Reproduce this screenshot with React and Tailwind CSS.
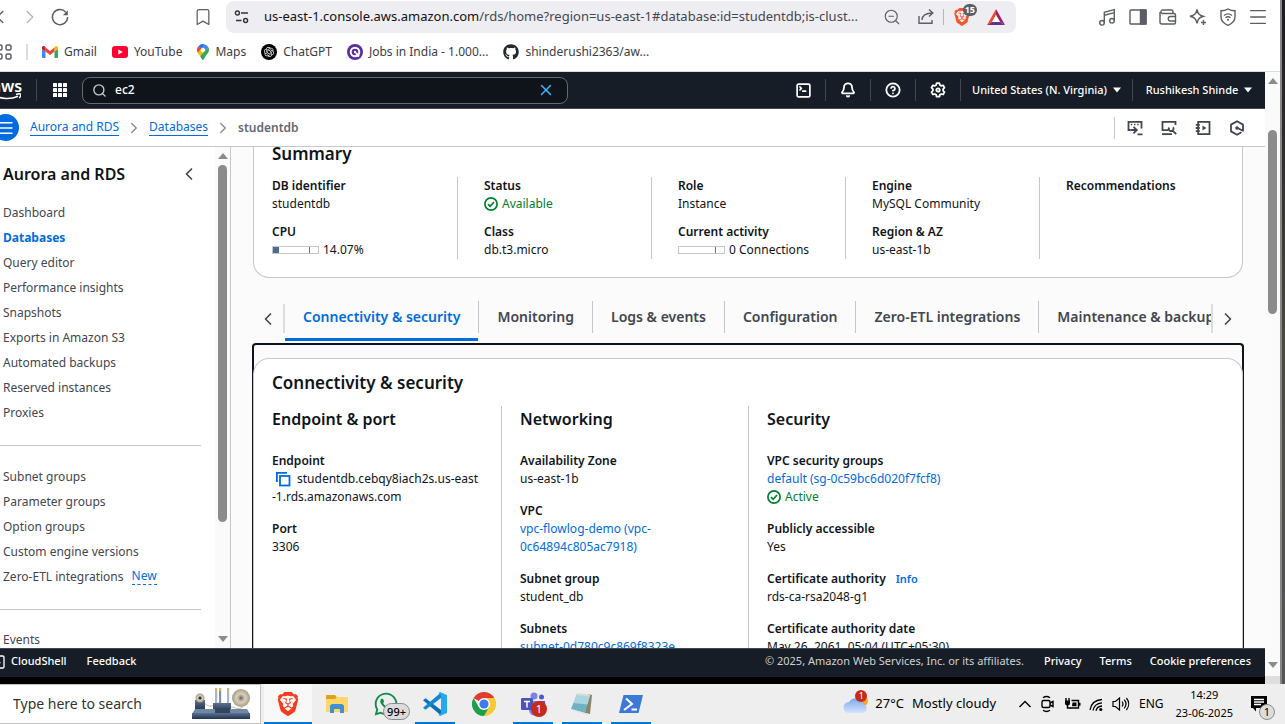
import {
  Bell,
  Bookmark,
  ChevronLeft,
  ChevronRight,
  CircleHelp,
  Menu,
  Search,
  SquareTerminal,
  X,
  ZoomOut,
} from "lucide-react";
import { SiBrave } from "react-icons/si";
import { RiOpenaiFill } from "react-icons/ri";
import { FaGithub, FaWhatsapp } from "react-icons/fa";

/* ---------- icons ---------- */

function Svg({ w = 20, h = w, box = "0 0 20 20", children, ...rest }) {
  return (
    <svg
      width={w}
      height={h}
      viewBox={box}
      fill="none"
      stroke="currentColor"
      strokeWidth="1.4"
      aria-hidden="true"
      className="shrink-0"
      {...rest}
    >
      {children}
    </svg>
  );
}

const ReloadIcon = () => (
  <Svg>
    <path d="M15.8 5.2A7.6 7.6 0 1 0 17.6 10" />
    <path d="M17.9 3.2v5h-5z" fill="currentColor" stroke="none" />
  </Svg>
);

const SiteSettingsIcon = () => (
  <Svg w={16} box="0 0 16 16">
    <circle cx="3.4" cy="4" r="2" />
    <path d="M7 4h7M2 11.5h5.500" />
    <circle cx="11.6" cy="11.5" r="2" />
  </Svg>
);

const ShareIcon = () => (
  <Svg w={18} box="0 0 18 18">
    <path d="M2 8v7.300h13V12" />
    <path d="M5 12c.3-4.500 3-7 10.500-7M12 1.500L15.800 5 12 8.500" />
  </Svg>
);

const BatIcon = () => (
  <Svg w={18} h={16} box="0 0 18 16" stroke="none">
    <path d="M9 0L0 16l5-3 4-7z" fill="#ff4724" />
    <path d="M9 0l9 16-5-3-4-7z" fill="#9e1f63" />
    <path d="M0 16h18l-5-3H5z" fill="#662d91" />
    <path d="M9 6l4 7H5z" fill="#fff" />
  </Svg>
);

const MusicIcon = () => (
  <Svg>
    <circle cx="4" cy="15.800" r="2.300" />
    <circle cx="14" cy="13.800" r="2.300" />
    <path d="M6.300 15.800V5.200l10-2.600v11.200M6.300 8.200l10-2.600" />
  </Svg>
);

const PanelIcon = () => (
  <Svg>
    <rect x="2" y="3" width="16" height="14" rx="1" />
    <path d="M12.500 3H18v14h-5.500z" fill="currentColor" />
  </Svg>
);

const WalletIcon = () => (
  <Svg>
    <path d="M15 6V4.500A1.500 1.500 0 0 0 13.500 3H4a2 2 0 0 0 0 3.500h12A1.500 1.500 0 0 1 17.500 8v7.500A1.500 1.500 0 0 1 16 17H4a2 2 0 0 1-2-2V5" />
    <path d="M17.500 9.500h-5a2.200 2.200 0 0 0 0 4.500h5" />
  </Svg>
);

const SparkleIcon = () => (
  <Svg>
    <path d="M9 2.500c.8 4 2 5.500 6.500 6.800C11 10.500 9.800 12 9 16.500 8.200 12 7 10.500 2 9.300 7 8 8.200 6.500 9 2.500zM15.500 13v5M13 15.500h5" />
  </Svg>
);

const ShieldIcon = () => (
  <Svg>
    <path d="M10 2c2 1.300 4.500 1.800 7 1.800v6C17 13.500 14.500 16.500 10 18.300 5.500 16.500 3 13.500 3 9.800v-6C5.500 3.800 8 3.300 10 2z" />
    <path d="M6 8.500c2.500-2 5.500-2 8 0M7.500 10.700c1.500-1.200 3.500-1.200 5 0" />
    <circle cx="10" cy="12.800" r="1" fill="currentColor" stroke="none" />
  </Svg>
);

const AppsIcon = () => (
  <Svg w={18} box="0 0 18 18" strokeWidth="1.500">
    <rect x="2" y="2" width="5" height="5" rx="1.500" />
    <rect x="11" y="2" width="5" height="5" rx="1.500" />
    <rect x="2" y="11" width="5" height="5" rx="1.500" />
    <rect x="11" y="11" width="5" height="5" rx="1.500" />
  </Svg>
);

const GmailIcon = () => (
  <Svg w={16} h={12} box="0 0 16 12" stroke="none">
    <path d="M1 12h2.500V5.500L0 3v8a1 1 0 0 0 1 1z" fill="#4285f4" />
    <path d="M12.500 12H15a1 1 0 0 0 1-1V3l-3.500 2.500z" fill="#34a853" />
    <path d="M12.500 1.500v4L16 3V1.700C16 .2 14.300-.5 13.200.4z" fill="#fbbc04" />
    <path d="M3.500 5.500v-4L8 5l4.500-3.500v4L8 9z" fill="#ea4335" />
    <path d="M0 1.700V3l3.500 2.500v-4L2.800.4C1.700-.5 0 .2 0 1.700z" fill="#c5221f" />
  </Svg>
);

const YouTubeIcon = () => (
  <Svg w={16} h={12} box="0 0 16 12" stroke="none">
    <rect width="16" height="12" rx="3" fill="#ff0033" />
    <path d="M6.300 3.400v5.200L10.800 6z" fill="#fff" />
  </Svg>
);

const MapsIcon = () => (
  <Svg w={12} h={16} box="0 0 12 16" stroke="none">
    <path d="M6 0a6 6 0 0 0-4.600 2.200L4.300 4.600 8 .4A6 6 0 0 0 6 0z" fill="#1a73e8" />
    <path d="M1.400 2.200A6 6 0 0 0 .9 9l3.400-4.400z" fill="#ea4335" />
    <path d="M8 .4L4.300 4.600a2.200 2.200 0 0 1 3.400 2.800l3.600-4.200A6 6 0 0 0 8 .4z" fill="#4285f4" />
    <path d="M.9 9c.5 1 1.300 2 2.200 3.200l4.600-4.800a2.200 2.200 0 0 1-3.400-2.800z" fill="#fbbc04" />
    <path d="M11.300 3.200L3.100 12.200C4.300 13.800 5 16 6 16s1.300-2.300 2.800-4.200C10.500 9.500 12 8 12 6c0-1-.2-2-.7-2.800z" fill="#34a853" />
  </Svg>
);

const JobsIcon = () => (
  <Svg w={16} box="0 0 16 16" stroke="#fff">
    <circle cx="8" cy="8" r="8" fill="#5b2d9e" stroke="none" />
    <circle cx="8" cy="8" r="4.300" strokeWidth="2" />
    <path d="M9 9l3 3.500" strokeWidth="2" />
    <circle cx="8" cy="8" r="1.200" fill="#fff" stroke="none" />
  </Svg>
);

const ConsoleGridIcon = () => (
  <Svg w={14} box="0 0 14 14" fill="#fff" stroke="none">
    {[0, 5, 10].map((y) =>
      [0, 5, 10].map((x) => <rect key={`${x}-${y}`} x={x} y={y} width="4" height="4" rx=".5" />),
    )}
  </Svg>
);

const GearIcon = () => (
  <Svg w={16} box="0 0 16 16" strokeWidth="1.800">
    <path
      d="M6.600 1.200h2.800l.5 1.900 1.300.8 1.900-.6 1.400 2.400-1.400 1.400v1.600l1.400 1.400-1.400 2.400-1.900-.5-1.300.8-.5 1.900H6.600l-.5-1.900-1.300-.8-1.900.5-1.400-2.400 1.400-1.400V7.100L1.500 5.700l1.400-2.400 1.900.6 1.300-.8z"
      strokeLinejoin="round"
    />
    <circle cx="8" cy="8" r="1.700" />
  </Svg>
);

const QueryShellIcon = () => (
  <Svg w={16} box="0 0 16 16" strokeWidth="1.800">
    <path d="M14.500 8.500V1.800H1.500v8.200H3.500" />
    <path d="M3.800 4.500h1.400M7 4.500h1.400M10.200 4.500h1.400" strokeWidth="1.300" />
    <path d="M3.500 10H9.500M6.500 6.800L9.800 10l-3.300 3.300M10.500 14.300H15.500" />
  </Svg>
);

const ScreenWrenchIcon = () => (
  <Svg w={16} box="0 0 16 16" strokeWidth="1.800">
    <path d="M14.500 5V1.800h-13v8.400H7M1 14.200h10" />
    <path d="M15.200 14.200l-3.700-3.700M8.300 7.500a2.200 2.200 0 0 0 3.200 3 2.200 2.200 0 0 0 .6-3.300" />
  </Svg>
);

const NotebookIcon = () => (
  <Svg w={16} box="0 0 16 16" strokeWidth="1.800">
    <path d="M3.200 1.800H14.500v12.400H3.200zM.8 4.800h4M.8 8h4M.8 11.200h4" />
    <path d="M7.500 5.500v5l4-2.500z" fill="currentColor" stroke="none" />
  </Svg>
);

const HexIcon = () => (
  <Svg w={16} box="0 0 16 16" strokeWidth="1.800">
    <path d="M12.500 12.200L8 14.800 2 11.400V4.600L8 1.200l6 3.400v6.200L8.500 8" strokeLinejoin="round" />
    <circle cx="8" cy="8" r="1.800" fill="currentColor" stroke="none" />
  </Svg>
);

const CheckIcon = () => (
  <Svg w={14} box="0 0 14 14" strokeWidth="1.700">
    <circle cx="7" cy="7" r="6.100" />
    <path d="M4 7.200l2.200 2.100L10 5" />
  </Svg>
);

const CopyIcon = () => (
  <Svg w={16} box="0 0 16 16" strokeWidth="1.800">
    <path d="M1.900 11V1.900H12" />
    <rect x="5" y="5" width="9.500" height="9.500" />
  </Svg>
);

const Caret = ({ up, className = "" }) => (
  <svg width="10" height="6" viewBox="0 0 10 6" className={className} aria-hidden="true">
    <path d={up ? "M0 6l5-6 5 6z" : "M0 0h10L5 6z"} fill="currentColor" />
  </svg>
);

const LatheIcon = () => (
  <Svg w={60} h={34} box="0 0 60 34" stroke="none">
    <defs>
      <linearGradient id="steel" x1="0" y1="0" x2="0" y2="1">
        <stop offset="0" stopColor="#5b7191" />
        <stop offset="1" stopColor="#22334d" />
      </linearGradient>
      <radialGradient id="reel">
        <stop offset="0" stopColor="#8f8574" />
        <stop offset=".5" stopColor="#d8cfb9" />
        <stop offset="1" stopColor="#a79c83" />
      </radialGradient>
    </defs>
    <path d="M9 14c6 2 7 6 12 5 5-2 6-4 9-3M52 20c-6 4-9-1-14 0" stroke="#b9a77b" strokeWidth=".8" />
    <rect x="24" y="3" width="2.200" height="15" fill="#a9b6c6" />
    <rect x="28" y="3" width="2.200" height="15" fill="#8192a8" />
    <rect x="36" y="3" width="2.200" height="15" fill="#a9b6c6" />
    <path d="M24 1h2.200v3H24zM28 1h2.200v3H28zM36 1h2.200v3H36z" fill="#d9b65c" />
    <path d="M4 13h10v10H4z" fill="url(#steel)" />
    <circle cx="9" cy="11" r="4.500" fill="url(#reel)" />
    <circle cx="9" cy="11" r="1.500" fill="#29303d" />
    <circle cx="50" cy="11" r="9" fill="url(#reel)" />
    <circle cx="50" cy="11" r="1.500" fill="#7a6a8c" />
    <path d="M22 16h18v9H22z" fill="url(#steel)" />
    <path d="M4 22h52l3 5H1z" fill="#6f87a5" />
    <path d="M1 26h58v6H1z" fill="url(#steel)" />
    <path d="M24 21h15v5H24z" fill="#31455f" />
  </Svg>
);

const FolderIcon = () => (
  <Svg w={22} h={20} box="0 0 22 20" stroke="none">
    <path d="M0 1h9l2 2h11v15H0z" fill="#ffd768" />
    <path d="M0 1h9l1.500 2L9 5H0z" fill="#e0a21b" />
    <path d="M4 19v-7.500L6 10h10l2 1.500V19h-4v-4H8v4z" fill="#3f8fd2" />
  </Svg>
);

const CodeIcon = () => (
  <Svg w={24} box="0 0 24 24" stroke="none">
    <path d="M0 8.200L2.500 6.200 18 18v5.500z" fill="#0a70b8" />
    <path d="M0 15.800l2.500 2L18 6V.5z" fill="#1286d0" />
    <path d="M17 0l7 3v18l-7 3-1.500-1L18 21V3l-2.500-2z" fill="#25a8ef" />
  </Svg>
);

const ChromeIcon = () => (
  <Svg w={24} box="0 0 24 24" stroke="none">
    <path d="M12 12L1.600 6A12 12 0 0 1 22.400 6z" fill="#e33b2e" />
    <path d="M12 6h10.400A12 12 0 0 1 12 24l5.200-9z" fill="#fcc934" />
    <path d="M6.800 15L1.600 6A12 12 0 0 0 12 24l5.200-9z" fill="#1e9e4a" />
    <circle cx="12" cy="12" r="6" fill="#fff" />
    <circle cx="12" cy="12" r="4.600" fill="#3b7ded" />
  </Svg>
);

const TeamsIcon = () => (
  <Svg w={24} box="0 0 24 24" stroke="none">
    <circle cx="13" cy="4" r="3.500" fill="#7b83eb" />
    <circle cx="20.500" cy="5" r="2.500" fill="#5059c9" />
    <path d="M8 9h11v9a5.500 5.500 0 0 1-11 0z" fill="#7b83eb" />
    <path d="M18 9h6v6a4 4 0 0 1-6 3z" fill="#5059c9" />
    <rect y="6" width="12" height="12" rx="1" fill="#4b53bc" />
    <path d="M3 9.500h6M6 9.500V15.500" stroke="#fff" strokeWidth="1.500" />
  </Svg>
);

const NotepadIcon = () => (
  <Svg w={24} box="0 0 24 24" stroke="none">
    <path d="M18 2l4 1-2 19-5-1z" fill="#8c8468" />
    <path d="M7 2l13 1.500L15 21 1 17z" fill="#6fb3c2" />
    <path d="M7 2l13 1.500-2.500 9L3.500 11z" fill="#a9d6de" />
    <path d="M7 1l13 1.500v2L6.500 3z" fill="#d8dcdc" />
    <path d="M1 17l14 4 4 1-3 1L4 19z" fill="#e6e6e6" />
  </Svg>
);

const PowerShellIcon = () => (
  <Svg w={24} h={20} box="0 0 24 20" stroke="none">
    <path d="M4.500 1H24l-4.500 18H0z" fill="#3c78d8" />
    <path d="M7 4.500l6 5.500-8 6M12.500 15.500H18" stroke="#fff" strokeWidth="2" />
  </Svg>
);

const CloudIcon = () => (
  <Svg w={26} h={20} box="0 0 26 20" stroke="none">
    <defs>
      <linearGradient id="cloud" x1="0" y1="0" x2="0" y2="1">
        <stop offset="0" stopColor="#7ba9ef" />
        <stop offset="1" stopColor="#d4e3fb" />
      </linearGradient>
    </defs>
    <circle cx="20" cy="7" r="5" fill="#f6a623" />
    <path d="M6 19a5.500 5.500 0 0 1 0-11 8 8 0 0 1 14.500 2A4.700 4.700 0 0 1 20 19z" fill="url(#cloud)" />
  </Svg>
);

const MeetNowIcon = () => (
  <Svg w={16} h={18} box="0 0 16 18">
    <rect x="2" y="5.500" width="8" height="7" rx="1.500" />
    <path d="M10 8l3-1.500v5L10 10M3 2.800c2-1.500 5-1.500 7 0M3 15.200c2 1.500 5 1.500 7 0" />
  </Svg>
);

const BatteryIcon = () => (
  <Svg w={17} h={14} box="0 0 17 14">
    <path d="M7.500 3.500h7v7.500H6M15.800 5.700v3" />
    <path d="M8.500 5.500h4v3.700H8zM1 3.500h5V6a2.500 2.500 0 0 1-5 0z" fill="currentColor" stroke="none" />
    <path d="M2 1v3M5 1v3M3.500 8v3h3" />
  </Svg>
);

const WifiIcon = () => (
  <Svg w={15} h={15} box="0 0 15 15" strokeWidth="1.300">
    <path d="M1 13C2 6.500 6 3 13 2.500M4 13.500C4.800 9 7.500 6.300 13 5.800M7 13.800C7.500 11 9.500 9.300 13 9" />
    <circle cx="11.800" cy="12.500" r="1.600" fill="currentColor" stroke="none" />
  </Svg>
);

const VolumeIcon = () => (
  <Svg w={18} h={16} box="0 0 18 16" strokeWidth="1.200">
    <path d="M1 5.500h2.500L7.500 2v12l-4-3.500H1zM10 5.500c1.200 1.500 1.200 3.500 0 5M12.200 3.700c2.200 2.600 2.200 6 0 8.600M14.400 2c3 3.600 3 8.400 0 12" />
  </Svg>
);

/* ---------- browser chrome ---------- */

function IconButton({ label, className = "", children }) {
  return (
    <button type="button" aria-label={label} className={`flex shrink-0 items-center justify-center ${className}`}>
      {children}
    </button>
  );
}

function Toolbar() {
  return (
    <div className="flex h-[34px] items-center pr-[7px] text-[#5c5e66]">
      <IconButton label="Back" className="-ml-[15px] w-[30px]">
        <ChevronLeft size={22} strokeWidth={1.5} />
      </IconButton>
      <IconButton label="Forward" className="w-[30px] text-[#b5b6ba]">
        <ChevronRight size={22} strokeWidth={1.5} />
      </IconButton>
      <IconButton label="Reload" className="w-[30px]">
        <ReloadIcon />
      </IconButton>
      <IconButton label="Bookmark this page" className="mr-2 ml-[113px] w-[30px]">
        <Bookmark size={20} strokeWidth={1.5} />
      </IconButton>
      <div className="flex h-8 min-w-0 flex-1 items-center rounded-lg bg-[#eeedf2] pr-1 pl-2">
        <span className="mr-[14px] text-[#333]">
          <SiteSettingsIcon />
        </span>
        <p className="min-w-0 flex-1 overflow-hidden text-[13px] whitespace-nowrap text-[#45474f]">
          <span className="text-[#111]">us-east-1.console.aws.amazon.com</span>
          /rds/home?region=us-east-1#database:id=studentdb;is-clust...
        </p>
        <IconButton label="Zoom out" className="ml-1 w-[34px]">
          <ZoomOut size={18} strokeWidth={1.5} />
        </IconButton>
        <IconButton label="Share" className="w-[34px]">
          <ShareIcon />
        </IconButton>
        <span className="h-4 w-px bg-[#b5b6bd]" />
        <IconButton label="Brave Shields" className="relative w-[36px] text-[#fb542b]">
          <SiBrave size={18} />
          <span className="absolute -top-1 right-[3px] rounded-md bg-[#5c5e66] px-[2px] text-[9px] leading-3 font-bold text-white">
            15
          </span>
        </IconButton>
        <IconButton label="Rewards" className="w-[32px]">
          <BatIcon />
        </IconButton>
      </div>
      <div className="ml-[77px] flex">
        <IconButton label="Music" className="w-[30px]"><MusicIcon /></IconButton>
        <IconButton label="Side panel" className="w-[30px]"><PanelIcon /></IconButton>
        <IconButton label="Wallet" className="w-[30px]"><WalletIcon /></IconButton>
        <IconButton label="Assistant" className="w-[30px]"><SparkleIcon /></IconButton>
        <IconButton label="VPN" className="w-[30px]"><ShieldIcon /></IconButton>
        <IconButton label="Menu" className="w-[30px]"><Menu size={22} strokeWidth={1.5} /></IconButton>
      </div>
    </div>
  );
}

const bookmarks = [
  { name: "Gmail", icon: <GmailIcon /> },
  { name: "YouTube", icon: <YouTubeIcon /> },
  { name: "Maps", icon: <MapsIcon /> },
  {
    name: "ChatGPT",
    icon: (
      <span className="flex size-4 items-center justify-center rounded-full bg-black text-white">
        <RiOpenaiFill size={12} />
      </span>
    ),
  },
  { name: "Jobs in India - 1.000...", icon: <JobsIcon /> },
  { name: "shinderushi2363/aw...", icon: <FaGithub size={16} className="text-[#24292f]" /> },
];

function BookmarksBar() {
  return (
    <div className="flex h-[38px] items-center border-b border-[#dcdce0] pb-px text-xs text-[#3b3d45]">
      <IconButton label="All apps" className="-ml-[5px] text-[#5c5e66]">
        <AppsIcon />
      </IconButton>
      <span className="mr-[14px] ml-[13px] h-4 w-[2px] bg-[#dcdce0]" />
      <nav className="flex items-center gap-[15px]">
        {bookmarks.map((b) => (
          <a key={b.name} href="#" className="flex items-center gap-[6px] whitespace-nowrap">
            {b.icon}
            {b.name}
          </a>
        ))}
      </nav>
    </div>
  );
}

/* ---------- AWS console ---------- */

function ConsoleHeader() {
  const cell = "flex h-[22px] w-[45px] shrink-0 items-center justify-center border-r border-[#424650]";
  return (
    <header className="flex h-[37px] items-center border-b border-[#424650] bg-[#161d26] text-[11px] font-medium text-white">
      <a href="#" aria-label="AWS home" className="-ml-2 flex w-[30px] flex-col items-center">
        <span className="text-base leading-3 font-semibold">aws</span>
        <svg width="28" height="8" viewBox="0 0 28 8" fill="none" stroke="#fff" strokeWidth="1.500" aria-hidden="true">
          <path d="M1 3c7 4.500 17 4.500 24 1.200M23 2.500c2-.8 4-.9 4.500-.4.400.8 0 2.500-1.200 4" />
        </svg>
      </a>
      <span className="ml-[14px] h-[22px] w-px bg-[#424650]" />
      <IconButton label="Services" className="w-[45px]">
        <ConsoleGridIcon />
      </IconButton>
      <label className="flex h-[27px] w-[486px] items-center rounded-lg border border-[#656871] bg-[#0f141a] pr-3 pl-[9px]">
        <Search size={15} strokeWidth={2.2} className="text-[#c6c6cd]" />
        <input
          aria-label="Search"
          defaultValue="ec2"
          className="ml-2 min-w-0 flex-1 bg-transparent text-xs font-medium outline-none"
        />
        <X size={18} className="text-[#42b4ff]" />
      </label>
      <div className="ml-auto flex items-center">
        <button type="button" aria-label="CloudShell" className={cell}><SquareTerminal size={17} strokeWidth={2.4} /></button>
        <button type="button" aria-label="Notifications" className={cell}><Bell size={16} strokeWidth={2.7} /></button>
        <button type="button" aria-label="Support" className={cell}><CircleHelp size={16} strokeWidth={2.7} /></button>
        <button type="button" aria-label="Settings" className={cell}><GearIcon /></button>
        <button type="button" className="flex h-[22px] w-[172px] items-center justify-center gap-[6px] whitespace-nowrap border-r border-[#424650]">
          United States (N. Virginia)
          <Caret className="w-[8px]" />
        </button>
        <button type="button" className="flex w-[132px] items-center justify-center gap-[6px] whitespace-nowrap">
          Rushikesh Shinde
          <Caret className="w-[8px]" />
        </button>
      </div>
    </header>
  );
}

function Breadcrumbs() {
  return (
    <div className="flex h-[38px] items-center border-b border-[#c6c6cd] bg-white text-xs">
      <IconButton label="Navigation" className="-ml-2 size-[27px] rounded-full bg-[#006ce0] text-white">
        <Menu size={18} />
      </IconButton>
      <nav aria-label="Breadcrumb" className="ml-[11px] flex items-center gap-[6px]">
        <a href="#" className="border-b border-[#006ce0] leading-4 text-[#006ce0]">Aurora and RDS</a>
        <ChevronRight size={18} className="text-[#8c8c94]" />
        <a href="#" className="border-b border-[#006ce0] leading-4 text-[#006ce0]">Databases</a>
        <ChevronRight size={18} className="text-[#8c8c94]" />
        <span className="font-semibold text-[#656871]">studentdb</span>
      </nav>
      <div className="mr-[20px] ml-auto flex items-center gap-[18px] text-[#424650]">
        <span className="-mr-[6px] h-[22px] w-px bg-[#c6c6cd]" />
        <IconButton label="Query shell"><QueryShellIcon /></IconButton>
        <IconButton label="Tools"><ScreenWrenchIcon /></IconButton>
        <IconButton label="Tutorials"><NotebookIcon /></IconButton>
        <IconButton label="Amazon Q"><HexIcon /></IconButton>
      </div>
    </div>
  );
}

const navGroups = [
  [
    "Dashboard",
    "Databases",
    "Query editor",
    "Performance insights",
    "Snapshots",
    "Exports in Amazon S3",
    "Automated backups",
    "Reserved instances",
    "Proxies",
  ],
  ["Subnet groups", "Parameter groups", "Option groups", "Custom engine versions", "Zero-ETL integrations"],
  ["Events"],
];

function Sidebar() {
  return (
    <aside className="flex w-[231px] shrink-0 border-r border-[#c6c6cd] bg-white">
      <div className="min-w-0 flex-1 overflow-hidden">
        <div className="flex h-[53px] items-center justify-between pr-[16px] pl-[3px]">
          <h2 className="text-base font-semibold text-[#0f141a]">Aurora and RDS</h2>
          <IconButton label="Collapse" className="text-[#424650]">
            <ChevronLeft size={20} />
          </IconButton>
        </div>
        {navGroups.map((group, i) => (
          <ul
            key={group[0]}
            className={`mr-[14px] pl-[3px] text-xs text-[#424650] ${
              i === 2 ? "pt-[17px]" : i === 1 ? "border-b border-[#c6c6cd] pt-[18px] pb-5" : "border-b border-[#c6c6cd] pb-5"
            }`}
          >
            {group.map((item) => (
              <li key={item} className="flex h-[25px] items-center">
                <a href="#" className={item === "Databases" ? "font-bold text-[#006ce0]" : ""}>
                  {item}
                </a>
                {item === "Zero-ETL integrations" && (
                  <span className="ml-2 border-b border-dashed border-[#006ce0] text-[#006ce0]">New</span>
                )}
              </li>
            ))}
          </ul>
        ))}
      </div>
      <div className="flex w-[15px] flex-col items-center bg-[#fafafa] py-[6px] text-[#8b8b8b]">
        <Caret up />
        <div className="mt-[6px] h-[357px] w-[9px] rounded-full bg-[#8b8b8b]" />
        <Caret className="mt-auto" />
      </div>
    </aside>
  );
}

function Field({ label, extra, children }) {
  return (
    <div className="leading-[18px]">
      <dt className="font-semibold">
        {label}
        {extra}
      </dt>
      <dd>{children}</dd>
    </div>
  );
}

function Status({ children }) {
  return (
    <span className="flex items-center gap-1 text-[#00802f]">
      <CheckIcon />
      {children}
    </span>
  );
}

function Gauge({ filled, children }) {
  return (
    <span className="flex items-center gap-1">
      <span className="flex h-2 w-[47px] border border-[#c6c6cd]">
        <span className={filled ? "w-[6px] bg-[#4a6a8f]" : ""} />
        <span className="mr-2 ml-auto w-px bg-[#c0504d]" />
      </span>
      {children}
    </span>
  );
}

function Link({ children }) {
  return (
    <a href="#" className="text-[#006ce0]">
      {children}
    </a>
  );
}

function Summary() {
  const col = "flex flex-col gap-[10px] border-l border-[#c6c6cd] pl-[26px]";
  return (
    <section className="shrink-0 rounded-b-2xl border-x border-b border-[#c6c6cd] bg-white pb-[18px]">
      <h2 className="pl-[18px] text-[17px] leading-[14px] font-semibold">Summary</h2>
      <dl className="mx-[9px] mt-4 grid grid-cols-5 text-xs">
        <div className="flex flex-col gap-[10px] pl-[9px]">
          <Field label="DB identifier">studentdb</Field>
          <Field label="CPU"><Gauge filled>14.07%</Gauge></Field>
        </div>
        <div className={col}>
          <Field label="Status"><Status>Available</Status></Field>
          <Field label="Class">db.t3.micro</Field>
        </div>
        <div className={col}>
          <Field label="Role">Instance</Field>
          <Field label="Current activity"><Gauge>0 Connections</Gauge></Field>
        </div>
        <div className={col}>
          <Field label="Engine">MySQL Community</Field>
          <Field label="Region & AZ">us-east-1b</Field>
        </div>
        <div className={col}>
          <Field label="Recommendations" />
        </div>
      </dl>
    </section>
  );
}

const tabs = ["Monitoring", "Logs & events", "Configuration", "Zero-ETL integrations", "Maintenance & backups"];

function Tabs() {
  return (
    <div className="mt-4 flex h-[49px] shrink-0 text-sm font-semibold text-[#424650]">
      <IconButton label="Scroll tabs left" className="my-[10px] w-8 border-r-2 border-[#dcdce0]">
        <ChevronLeft size={20} />
      </IconButton>
      <div role="tablist" className="flex min-w-0 flex-1 overflow-hidden">
        <button
          type="button"
          role="tab"
          aria-selected="true"
          className="h-[47px] shrink-0 border-b-[3px] border-[#006ce0] px-[18px] pt-px whitespace-nowrap text-[#006ce0]"
        >
          Connectivity &amp; security
        </button>
        {tabs.map((t) => (
          <button
            key={t}
            type="button"
            role="tab"
            aria-selected="false"
            className="mt-[7px] h-8 shrink-0 border-l border-[#c6c6cd] px-[18px] pb-px whitespace-nowrap"
          >
            {t}
          </button>
        ))}
      </div>
      <IconButton label="Scroll tabs right" className="my-[10px] w-8 border-l-2 border-[#dcdce0]">
        <ChevronRight size={20} />
      </IconButton>
    </div>
  );
}

function Connectivity() {
  const heading = "mb-[20px] text-base leading-[26px] font-semibold";
  const list = "flex flex-col gap-[14px]";
  return (
    <div className="-mx-px flex-1 rounded-t border-2 border-b-0 border-[#0f141a] pt-[13px]">
      <section className="-mx-px h-full rounded-t-2xl border border-b-0 border-[#c6c6cd] bg-white pt-[13px]">
        <h2 className="pl-[18px] text-[17px] leading-[22px] font-semibold">Connectivity &amp; security</h2>
        <div className="mt-3 grid grid-cols-4 text-xs">
          <div className="pl-[18px]">
            <h3 className={heading}>Endpoint &amp; port</h3>
            <dl className={list}>
              <Field label="Endpoint">
                <span className="flex items-center gap-[6px] pl-[3px]">
                  <button type="button" aria-label="Copy endpoint" className="text-[#006ce0]"><CopyIcon /></button>
                  studentdb.cebqy8iach2s.us-east
                </span>
                -1.rds.amazonaws.com
              </Field>
              <Field label="Port">3306</Field>
            </dl>
          </div>
          <div className="border-l border-[#c6c6cd] pl-[18px]">
            <h3 className={heading}>Networking</h3>
            <dl className={list}>
              <Field label="Availability Zone">us-east-1b</Field>
              <Field label="VPC">
                <Link>
                  vpc-flowlog-demo (vpc-
                  <br />
                  0c64894c805ac7918)
                </Link>
              </Field>
              <Field label="Subnet group">student_db</Field>
              <Field label="Subnets"><Link>subnet-0d780c9c869f8323e</Link></Field>
            </dl>
          </div>
          <div className="border-l border-[#c6c6cd] pl-[18px]">
            <h3 className={heading}>Security</h3>
            <dl className={list}>
              <Field label="VPC security groups">
                <Link>default (sg-0c59bc6d020f7fcf8)</Link>
                <Status>Active</Status>
              </Field>
              <Field label="Publicly accessible">Yes</Field>
              <Field
                label="Certificate authority"
                extra={<a href="#" className="ml-[10px] text-[11px] text-[#006ce0]">Info</a>}
              >
                rds-ca-rsa2048-g1
              </Field>
              <Field label="Certificate authority date">May 26, 2061, 05:04 (UTC+05:30)</Field>
            </dl>
          </div>
        </div>
      </section>
    </div>
  );
}

function ConsoleFooter() {
  return (
    <footer className="flex h-[29px] items-center border-t border-[#424650] bg-[#161d26] pr-[14px] pb-[3px] text-[11px] font-medium whitespace-nowrap text-white">
      <button type="button" className="-ml-[10px] flex items-center gap-[5px]">
        <SquareTerminal size={16} />
        CloudShell
      </button>
      <button type="button" className="ml-[20px]">Feedback</button>
      <span className="mr-5 ml-auto font-normal text-[#d0d0d6]">
        © 2025, Amazon Web Services, Inc. or its affiliates.
      </span>
      <a href="#" className="mr-[18px]">Privacy</a>
      <a href="#" className="mr-[18px]">Terms</a>
      <a href="#">Cookie preferences</a>
    </footer>
  );
}

/* ---------- taskbar ---------- */

const apps = [
  { name: "Brave", active: true, open: true, icon: <SiBrave size={24} className="text-[#fb3b1e]" /> },
  { name: "File Explorer", icon: <FolderIcon /> },
  { name: "WhatsApp", badge: "99+", icon: <FaWhatsapp size={26} className="text-[#128c4b]" /> },
  { name: "Visual Studio Code", open: true, icon: <CodeIcon /> },
  { name: "Chrome", icon: <ChromeIcon /> },
  { name: "Teams", open: true, alert: "1", icon: <TeamsIcon /> },
  { name: "Notepad", open: true, icon: <NotepadIcon /> },
  { name: "PowerShell", open: true, icon: <PowerShellIcon /> },
];

function Taskbar() {
  return (
    <div className="flex h-10 shrink-0 items-center bg-[#eeeeee] text-black">
      <label className="flex h-10 w-[261px] items-center border border-l-0 border-[#c4c4c4] bg-white pr-[9px] pl-[13px]">
        <input
          aria-label="Type here to search"
          placeholder="Type here to search"
          className="min-w-0 flex-1 bg-transparent text-sm outline-none placeholder:text-[#333]"
        />
        <LatheIcon />
      </label>
      <div className="ml-[3px] flex gap-px">
        {apps.map((a) => (
          <button
            key={a.name}
            type="button"
            aria-label={a.name}
            className={`relative flex h-10 w-12 items-center justify-center ${a.active ? "bg-[#f8f8f8]" : ""}`}
          >
            {a.icon}
            {a.open && (
              <span className={`absolute bottom-0 h-[2px] bg-[#0078d4] ${a.active ? "w-12" : "w-10"}`} />
            )}
            {a.badge && (
              <span className="absolute right-0 bottom-1 rounded-full border border-[#8a8a8a] bg-[#dcdcdc] px-[3px] text-[11px] leading-[15px] font-medium">
                {a.badge}
              </span>
            )}
            {a.alert && (
              <span className="absolute right-[10px] bottom-[7px] size-4 rounded-full bg-[#c42b1c] text-[11px] leading-4 text-white">
                {a.alert}
              </span>
            )}
          </button>
        ))}
      </div>
      <div className="mr-[10px] ml-auto flex items-center whitespace-nowrap">
        <button type="button" className="relative flex items-center gap-[6px] text-[13px]">
          <CloudIcon />
          <span className="absolute -top-1 left-3 size-3 rounded-full bg-[#c42b1c] text-center text-[9px] leading-3 text-white">1</span>
          <span>27°C</span>
          <span className="ml-[2px]">Mostly cloudy</span>
        </button>
        <div className="mr-[9px] ml-[22px] flex items-center gap-2">
          <Svg w={14} h={8} box="0 0 14 8"><path d="M1.500 7L7 1.500 12.500 7" /></Svg>
          <MeetNowIcon />
          <BatteryIcon />
          <WifiIcon />
          <VolumeIcon />
        </div>
        <span className="text-xs">ENG</span>
        <div className="ml-3 text-center text-[11px] leading-[18px]">
          <div>14:29</div>
          <div>23-06-2025</div>
        </div>
        <button type="button" aria-label="Notifications" className="relative ml-[18px] h-6 w-6">
          <Svg w={16} h={16} box="0 0 16 16" stroke="none">
            <path d="M0 0h16v12H5v3.500L2 12H0z" fill="#000" />
            <path d="M3 3.500h10M3 6h10M3 8.500h7" stroke="#fff" />
          </Svg>
          <span className="absolute right-0 -bottom-1 size-4 rounded-full border border-[#8a8a8a] bg-[#dcdcdc] text-[11px] leading-[14px]">
            1
          </span>
        </button>
      </div>
    </div>
  );
}

export default function App() {
  return (
    <div className="flex h-screen flex-col overflow-hidden bg-black font-['Noto_Sans','Open_Sans',sans-serif]">
      <div className="flex min-h-0 flex-1 bg-[#2a262b]">
        <div className="flex min-w-0 flex-1 flex-col border-r-2 border-[#85858a] bg-white">
          <Toolbar />
          <BookmarksBar />
          <div className="flex min-h-0 flex-1">
            <div className="flex min-w-0 flex-1 flex-col">
              <ConsoleHeader />
              <Breadcrumbs />
              <div className="flex min-h-0 flex-1 overflow-hidden">
                <Sidebar />
                <main className="flex min-w-0 flex-1 flex-col overflow-hidden bg-[#fbfbfb] px-[22px] text-[#0f141a]">
                  <Summary />
                  <Tabs />
                  <Connectivity />
                </main>
              </div>
              <ConsoleFooter />
              <div className="h-[7px] shrink-0 bg-black" />
            </div>
            <div className="flex w-[15px] flex-col items-center bg-[#fafafa] pt-[6px] text-[#8b8b8b]">
              <Caret up />
              <div className="mt-[46px] h-[184px] w-[9px] rounded-full bg-[#8b8b8b]" />
              <Caret className="mt-auto mb-[8px]" />
              <div className="h-2 w-full bg-[#dedede]" />
            </div>
          </div>
        </div>
        <div className="w-[3px] bg-linear-to-b from-[#1d1a20] via-[#4a4a38] to-[#555555]" />
      </div>
      <Taskbar />
    </div>
  );
}
